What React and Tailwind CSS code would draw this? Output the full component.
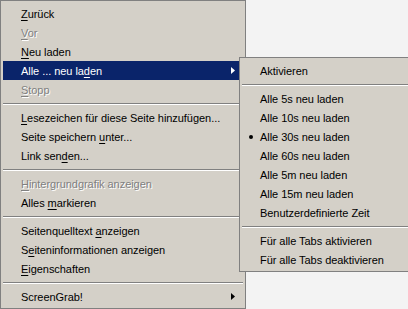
import React from "react";

const font = { fontFamily: '"Liberation Sans", Arial, sans-serif' };

function U({ children }) {
  return <span className="underline underline-offset-[2px] decoration-1">{children}</span>;
}

function Arrow({ white }) {
  return (
    <svg width="4" height="7" viewBox="0 0 4 7" className="shrink-0">
      <path d="M0 0 L4 3.5 L0 7 Z" fill={white ? "#ffffff" : "#000000"} />
    </svg>
  );
}

function Item({ children, disabled, active, arrow, bullet }) {
  const color = active
    ? "bg-[#0a246a] text-white"
    : disabled
    ? "text-[#808080] [text-shadow:1px_1px_0_#ffffff]"
    : "text-black";
  return (
    <div className={`relative flex h-[19px] items-center pl-[18px] pr-[8px] whitespace-nowrap ${color}`}>
      {bullet && (
        <span className="absolute left-[7px] top-[8px] h-[4px] w-[4px] rounded-full bg-black" />
      )}
      <span className="flex-1 pt-[1px] leading-none tracking-[-0.05px]">{children}</span>
      {arrow && <Arrow white={active} />}
    </div>
  );
}

function Sep() {
  return (
    <div className="h-[9px] pt-[4px]">
      <div className="h-px bg-[#808080]" />
      <div className="h-px bg-white" />
    </div>
  );
}

export default function App() {
  return (
    <div className="relative h-[309px] w-[408px] overflow-hidden bg-[#f3f3f3] text-[11px]" style={font}>
      <div className="h-[309px] w-[246px] border border-[#808080] bg-[#d4d0c8] px-[2px] pt-[3px]">
        <Item><U>Z</U>urück</Item>
        <Item disabled><U>V</U>or</Item>
        <Item><U>N</U>eu laden</Item>
        <Item active arrow>Alle ... neu la<U>d</U>en</Item>
        <Item disabled><U>S</U>topp</Item>
        <Sep />
        <Item><U>L</U>esezeichen für diese Seite hinzufügen...</Item>
        <Item>Seite speichern <U>u</U>nter...</Item>
        <Item>Link sen<U>d</U>en...</Item>
        <Sep />
        <Item disabled><U>H</U>intergrundgrafik anzeigen</Item>
        <Item>Alles <U>m</U>arkieren</Item>
        <Sep />
        <Item>Seitenquelltext <U>a</U>nzeigen</Item>
        <Item>S<U>e</U>iteninformationen anzeigen</Item>
        <Item><U>E</U>igenschaften</Item>
        <Sep />
        <Item arrow>ScreenGrab!</Item>
      </div>

      <div className="absolute left-[239px] top-[57px] w-[175px] border border-[#808080] bg-[#d4d0c8] px-[2px] pt-[3px] pb-[2px]">
        <Item>Aktivieren</Item>
        <Sep />
        <Item>Alle 5s neu laden</Item>
        <Item>Alle 10s neu laden</Item>
        <Item bullet>Alle 30s neu laden</Item>
        <Item>Alle 60s neu laden</Item>
        <Item>Alle 5m neu laden</Item>
        <Item>Alle 15m neu laden</Item>
        <Item>Benutzerdefinierte Zeit</Item>
        <Sep />
        <Item>Für alle Tabs aktivieren</Item>
        <Item>Für alle Tabs deaktivieren</Item>
      </div>
    </div>
  );
}
